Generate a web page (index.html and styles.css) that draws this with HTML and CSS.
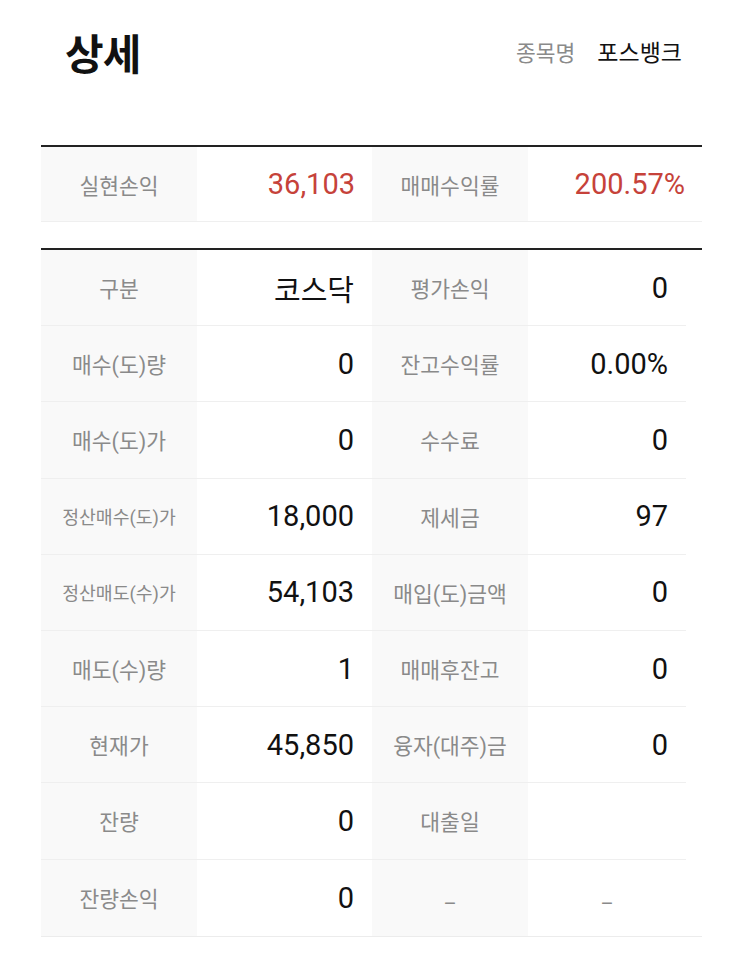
FILE: index.html
```html
<!DOCTYPE html>
<html lang="ko">
<head>
<meta charset="utf-8">
<link rel="stylesheet" href="styles.css">
</head>
<body>
<div class="page">
  <header class="header">
    <h1 class="title">상세</h1>
    <div class="stock">
      <span class="stock-label">종목명</span>
      <span class="stock-name">포스뱅크</span>
    </div>
  </header>

  <section class="summary">
    <div class="row row-wide">
      <div class="cell label">실현손익</div>
      <div class="cell value red">36,103</div>
      <div class="cell label">매매수익률</div>
      <div class="cell value red">200.57%</div>
    </div>
  </section>

  <section class="detail">
    <div class="row"><div class="cell label">구분</div><div class="cell value">코스닥</div><div class="cell label">평가손익</div><div class="cell value">0</div></div>
    <div class="row"><div class="cell label">매수(도)량</div><div class="cell value">0</div><div class="cell label">잔고수익률</div><div class="cell value">0.00%</div></div>
    <div class="row"><div class="cell label">매수(도)가</div><div class="cell value">0</div><div class="cell label">수수료</div><div class="cell value">0</div></div>
    <div class="row"><div class="cell label small">정산매수(도)가</div><div class="cell value">18,000</div><div class="cell label">제세금</div><div class="cell value">97</div></div>
    <div class="row"><div class="cell label small">정산매도(수)가</div><div class="cell value">54,103</div><div class="cell label">매입(도)금액</div><div class="cell value">0</div></div>
    <div class="row"><div class="cell label">매도(수)량</div><div class="cell value">1</div><div class="cell label">매매후잔고</div><div class="cell value">0</div></div>
    <div class="row"><div class="cell label">현재가</div><div class="cell value">45,850</div><div class="cell label">융자(대주)금</div><div class="cell value">0</div></div>
    <div class="row"><div class="cell label">잔량</div><div class="cell value">0</div><div class="cell label">대출일</div><div class="cell value"></div></div>
    <div class="row last"><div class="cell label">잔량손익</div><div class="cell value">0</div><div class="cell label dash">–</div><div class="cell value dash center">–</div></div>
  </section>
</div>
</body>
</html>
```

FILE: styles.css
```css
* { box-sizing: border-box; }
html, body { margin: 0; padding: 0; background: #fff; }
body {
  font-family: Roboto, "Noto Sans CJK KR", "Noto Sans", sans-serif;
  color: #111;
}
.page { width: 743px; }

.header {
  display: flex;
  align-items: center;
  justify-content: space-between;
  padding: 24px 61px 0 65px;
  height: 80px;
}
.title {
  margin: 0;
  font-family: "Noto Sans CJK KR", sans-serif;
  font-size: 42px;
  font-weight: 700;
  letter-spacing: -1px;
  line-height: 56px;
  color: #111;
}
.stock { display: flex; align-items: center; gap: 22px; margin-top: -2px; }
.stock-label {
  font-family: "Noto Sans CJK KR", sans-serif;
  font-size: 21.5px;
  color: #8a8a8a;
}
.stock-name {
  font-family: "Noto Sans CJK KR", sans-serif;
  font-size: 23px;
  color: #111;
}

.summary {
  margin: 65px 0 0 41px;
  width: 661px;
  border-top: 2px solid #222;
}
.detail {
  margin: 26px 0 0 41px;
  width: 661px;
  border-top: 2px solid #222;
  border-bottom: 1px solid #ececec;
}

.row {
  display: grid;
  grid-template-columns: 156px 175px 156px 158px;
  width: 645px;
  height: 76.2px;
  border-bottom: 1px solid #efefef;
}
.row.last { border-bottom: none; }
.row-wide {
  grid-template-columns: 156px 175px 156px 174px;
  width: 661px;
  height: 75px;
  border-bottom: 1px solid #efefef;
}

.cell {
  display: flex;
  align-items: center;
}
.label {
  background: #f9f9f9;
  justify-content: center;
  font-size: 21.5px;
  color: #8a8a8a;
}
.label.small { font-size: 18.3px; }
.value {
  justify-content: flex-end;
  padding-right: 18px;
  font-size: 29px;
  color: #111;
}
.row-wide .value { padding-right: 17px; }
.red { color: #c6423a; }
.dash { color: #8a8a8a; font-size: 20px; padding-top: 12px; }
.value.center { justify-content: center; padding-right: 0; }
```
